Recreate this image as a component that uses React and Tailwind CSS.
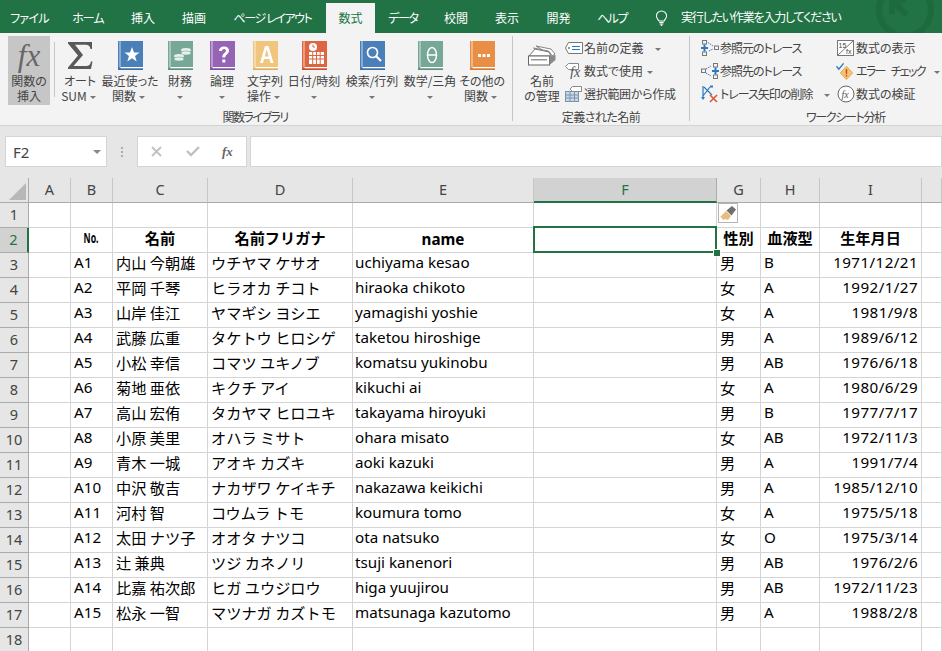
import { Fragment } from 'react'

const tabs = [
  ['ファイル', 'w-[59px] tracking-[-0.7px]'], ['ホーム', 'w-[58px] tracking-[-1px]'], ['挿入', 'w-[52px]'], ['描画', 'w-[50px]'],
  ['ページ レイアウト', 'w-[107px] tracking-[-1.4px]'], ['数式', 'w-[49px]'], ['データ', 'w-[56px] tracking-[-1.2px]'], ['校閲', 'w-[50px]'],
  ['表示', 'w-[52px]'], ['開発', 'w-[51px]'], ['ヘルプ', 'w-[56px] tracking-[-1.5px]'],
]

const people = [
  ['A1', '内山 今朝雄', 'ウチヤマ ケサオ', 'uchiyama kesao', '男', 'B', '1971/12/21'],
  ['A2', '平岡 千琴', 'ヒラオカ チコト', 'hiraoka chikoto', '女', 'A', '1992/1/27'],
  ['A3', '山岸 佳江', 'ヤマギシ ヨシエ', 'yamagishi yoshie', '女', 'A', '1981/9/8'],
  ['A4', '武藤 広重', 'タケトウ ヒロシゲ', 'taketou hiroshige', '男', 'A', '1989/6/12'],
  ['A5', '小松 幸信', 'コマツ ユキノブ', 'komatsu yukinobu', '男', 'AB', '1976/6/18'],
  ['A6', '菊地 亜依', 'キクチ アイ', 'kikuchi ai', '女', 'A', '1980/6/29'],
  ['A7', '高山 宏侑', 'タカヤマ ヒロユキ', 'takayama hiroyuki', '男', 'B', '1977/7/17'],
  ['A8', '小原 美里', 'オハラ ミサト', 'ohara misato', '女', 'AB', '1972/11/3'],
  ['A9', '青木 一城', 'アオキ カズキ', 'aoki kazuki', '男', 'A', '1991/7/4'],
  ['A10', '中沢 敬吉', 'ナカザワ ケイキチ', 'nakazawa keikichi', '男', 'A', '1985/12/10'],
  ['A11', '河村 智', 'コウムラ トモ', 'koumura tomo', '女', 'A', '1975/5/18'],
  ['A12', '太田 ナツ子', 'オオタ ナツコ', 'ota natsuko', '女', 'O', '1975/3/14'],
  ['A13', '辻 兼典', 'ツジ カネノリ', 'tsuji kanenori', '男', 'AB', '1976/2/6'],
  ['A14', '比嘉 祐次郎', 'ヒガ ユウジロウ', 'higa yuujirou', '男', 'AB', '1972/11/23'],
  ['A15', '松永 一智', 'マツナガ カズトモ', 'matsunaga kazutomo', '男', 'A', '1988/2/8'],
]

const gridCols = 'grid grid-cols-[29px_42px_42px_95px_145px_181px_183px_44px_59px_102px_20px]'
const cell = 'h-[25px] border-r border-b border-[#d4d4d4] px-[3px] leading-[19px] whitespace-nowrap text-[15.2px] text-black'
const latin = "font-['Noto_Sans',sans-serif] text-[14.7px] leading-[19px]"
const palt = "[font-feature-settings:'palt']"

function Caret() {
  return <span className="inline-block w-0 h-0 border-x-[3px] border-x-transparent border-t-[3px] border-t-[#777] align-middle mx-[3px]" />
}

function Book({ color, dark, children }) {
  return (
    <svg width="25" height="29" viewBox="0 0 25 29">
      <rect x="0" y="0" width="25" height="28" fill={color} />
      <rect x="1.500" y="0" width="1" height="26" fill="#fff" opacity="0.7" />
      <rect x="2.500" y="26" width="22.500" height="1.500" fill="#fff" />
      <rect x="0" y="27.500" width="25" height="1.500" fill={dark} />
      {children}
    </svg>
  )
}

function BigBtn({ width, icon, lines, caret, active }) {
  return (
    <div className={`${width} ${active ? 'bg-[#c6c6c6]' : ''} h-[69px] flex flex-col items-center shrink-0`}>
      <div className="h-[37px] pt-[5px] flex items-start justify-center">{icon}</div>
      <div className="text-[12px] leading-[15px] text-[#444] text-center whitespace-nowrap">
        {lines.map((l, i) => (
          <Fragment key={i}>
            {i > 0 && <br />}
            {l}
          </Fragment>
        ))}
        {caret && lines.length === 1 && <br />}
        {caret && <Caret />}
      </div>
    </div>
  )
}

function SmallBtn({ icon, label, caretGap, tight }) {
  return (
    <div className="h-[23px] flex items-center text-[12px] text-[#444] whitespace-nowrap">
      <span className="w-[19px] h-[18px] flex items-center justify-center mr-[1px] shrink-0">{icon}</span>
      <span className={tight}>{label}</span>
      {caretGap != null && <span className={caretGap}><Caret /></span>}
    </div>
  )
}

function Separator() {
  return <div className="w-px h-[85px] bg-[#c6c6c6] shrink-0" />
}

const IconSum = (
  <svg width="26" height="29" viewBox="0 0 26 29"><path d="M1 1h24v7h-1.500c-.5-3-2-4.300-5-4.300H8l8 10.300-9.500 11H19c3 0 4.500-1.500 5-4.500H25.500L24 28H1v-1.500L11 14.500 1 2.500z" fill="#595959" /></svg>
)
const IconStar = <Book color="#4a7fb8" dark="#3a6ea5"><path d="M14 6l2 5.500h5.500l-4.500 3.500 1.700 5.500-4.700-3.300-4.700 3.300 1.700-5.500-4.500-3.500h5.500z" fill="#fff" /></Book>
const IconCoins = (
  <Book color="#76a797" dark="#5d8f7e">
    <ellipse cx="18" cy="9" rx="5" ry="2" fill="#e8f0ed" /><ellipse cx="18" cy="12" rx="5" ry="2" fill="#e8f0ed" stroke="#76a797" strokeWidth="0.6" />
    <ellipse cx="11" cy="15" rx="5" ry="2" fill="#e8f0ed" /><ellipse cx="11" cy="18" rx="5" ry="2" fill="#e8f0ed" stroke="#76a797" strokeWidth="0.6" />
  </Book>
)
const IconQ = <Book color="#9564b5" dark="#7d4f9e"><path d="M9 10c0-3 2-4.500 5-4.500s5 1.500 5 4.200c0 3.600-3.700 3.500-3.700 6.800h-3c0-4.500 3.600-4.500 3.600-6.700 0-1-.8-1.700-1.900-1.700s-2 .7-2.100 2z" fill="#fff" /><rect x="12.300" y="18.500" width="3" height="3" fill="#fff" /></Book>
const IconA = <Book color="#f0c67f" dark="#e0ac5c"><path d="M12 5h3.500l5 17h-3l-1-4h-5.500l-1 4h-3zM13.700 8.500l-2 7h4z" fill="#fff" fillRule="evenodd" /></Book>
const IconCal = (
  <Book color="#dd6541" dark="#c5522f">
    <rect x="7" y="11" width="15" height="12" fill="#fff" />
    <path d="M7 14.500h15M7 18h15M10.700 11v12M14.500 11v12M18.200 11v12" stroke="#dd6541" strokeWidth="1" />
    <circle cx="11" cy="6" r="4" fill="#fff" /><path d="M11 3.500V6h2" stroke="#dd6541" fill="none" />
  </Book>
)
const IconSearch = <Book color="#4a7fb8" dark="#3a6ea5"><circle cx="12.500" cy="11.500" r="5" fill="none" stroke="#fff" strokeWidth="1.700" /><path d="M16 15l5 5" stroke="#fff" strokeWidth="2.200" /></Book>
const IconTheta = <Book color="#76a797" dark="#5d8f7e"><ellipse cx="14" cy="14" rx="4.500" ry="7.500" fill="none" stroke="#fff" strokeWidth="1.500" /><path d="M10 14h8" stroke="#fff" strokeWidth="1.500" /></Book>
const IconMore = <Book color="#e98f45" dark="#d67a30"><rect x="8" y="13" width="3" height="3" fill="#fff" /><rect x="12.500" y="13" width="3" height="3" fill="#fff" /><rect x="17" y="13" width="3" height="3" fill="#fff" /></Book>
const IconNames = (
  <svg className="mt-[4px]" width="28" height="21" viewBox="0 0 28 21">
    <path d="M8 1l15 3 4 5-3 2z" fill="#fff" stroke="#888" />
    <path d="M5.500 3l15 3 4 5-3 1z" fill="#fff" stroke="#888" />
    <circle cx="20" cy="7" r="1" fill="#888" />
    <path d="M1 11l6-7 14 3 2 4z" fill="#fff" stroke="#777" />
    <rect x=".5" y="11" width="21" height="9" fill="#fff" stroke="#666" />
    <path d="M21.500 11l6-1v5l-6 5z" fill="#8a8a8a" />
    <rect x="3" y="14" width="16" height="1.500" fill="#999" />
  </svg>
)
const IconTag = (
  <svg width="18" height="12" viewBox="0 0 18 12"><path d="M3.500.5h14v11h-14L.5 6z" fill="#fff" stroke="#777" /><circle cx="4" cy="6" r="1" fill="#777" /><path d="M7 4.500h8M7 7.500h8" stroke="#2b79c2" strokeWidth="1.200" /></svg>
)
const IconUseFx = (
  <svg width="18" height="17" viewBox="0 0 18 17"><path d="M3.500 1.500h10v6h-10L.5 4.500z" fill="#fff" stroke="#888" /><text x="5" y="15" fontSize="14" fontStyle="italic" fontFamily="Liberation Serif" fill="#555">fx</text></svg>
)
const IconCreate = (
  <svg width="18" height="17" viewBox="0 0 18 17"><rect x=".5" y="6.500" width="13" height="10" fill="#c9d9ea" stroke="#7d93a8" /><path d="M.5 10h13M.5 13h13M5 6.500v10M9.500 6.500v10" stroke="#7d93a8" /><path d="M7.500 1.500h9v5h-9L5 4z" fill="#fff" stroke="#888" /></svg>
)
const IconTracePrec = (
  <svg width="18" height="16" viewBox="0 0 18 16"><rect x="1.500" y="0.500" width="4" height="3.500" fill="none" stroke="#777" /><rect x="13.500" y="6" width="4" height="3.500" fill="none" stroke="#777" /><rect x="1.500" y="12" width="4" height="3.500" fill="none" stroke="#777" /><path d="M0 8h7M3.500 4.500v7" stroke="#2b79c2" strokeWidth="2" /><path d="M7 2.500l5 3.500M8 11l4-2" stroke="#2b79c2" strokeDasharray="1.500 1" /></svg>
)
const IconTraceDep = (
  <svg width="18" height="16" viewBox="0 0 18 16"><rect x="0.500" y="6" width="4" height="3.500" fill="none" stroke="#777" /><rect x="12.500" y="0.500" width="4" height="3.500" fill="none" stroke="#777" /><rect x="12.500" y="12" width="4" height="3.500" fill="none" stroke="#777" /><path d="M11 8h7M14.500 4.500v7" stroke="#2b79c2" strokeWidth="2" /><path d="M5 6l5-3M5 10l5 3" stroke="#2b79c2" strokeDasharray="1.500 1" /></svg>
)
const IconRemove = (
  <svg width="18" height="18" viewBox="0 0 18 18"><path d="M2 1v12M9 2l-7 9M3 2l8 8" stroke="#2b79c2" strokeWidth="1.200" fill="none" /><path d="M0 12l2 3 2-3zM9 .5h3v2H9z" fill="#2b79c2" /><path d="M9 10l7 7M16 10l-7 7" stroke="#d9583a" strokeWidth="1.600" /></svg>
)
const IconShowF = (
  <svg width="18" height="16" viewBox="0 0 18 16"><rect x=".5" y=".5" width="16" height="15" fill="#fff" stroke="#777" /><path d="M.5 15.500l16-15" stroke="#777" /><text x="1.500" y="7.500" fontSize="7" fontFamily="Liberation Sans" fill="#444">15</text><text x="9" y="14" fontSize="7" fontFamily="Liberation Sans" fill="#444">fx</text></svg>
)
const IconError = (
  <svg width="20" height="18" viewBox="0 0 20 18"><path d="M11 4l6.500 7-6.500 7-6.500-7z" fill="#f2c572" stroke="#e3a94c" /><rect x="10.200" y="7" width="1.600" height="5" fill="#d24726" /><rect x="10.200" y="13" width="1.600" height="1.700" fill="#d24726" /><path d="M.5 4l2.500 3L8 1" stroke="#2b79c2" strokeWidth="1.500" fill="none" /></svg>
)
const IconEval = (
  <svg width="18" height="18" viewBox="0 0 18 18"><circle cx="9" cy="9" r="8" fill="#fff" stroke="#666" /><text x="4.500" y="12.500" fontSize="10" fontStyle="italic" fontFamily="Liberation Serif" fill="#555">fx</text></svg>
)

function Ribbon() {
  return (
    <div className={`h-[93px] bg-[#f3f3f3] border-b border-[#d4d4d4] flex pt-[3px] shrink-0 ${palt}`}>
      {/* 関数ライブラリ */}
      <div className="w-[512px] pl-[8px] shrink-0">
        <div className="flex h-[69px]">
          <BigBtn width="w-[42px]" active lines={['関数の', '挿入']} icon={<span className="font-['Liberation_Serif',serif] italic text-[31px] leading-[30px] text-[#666]">fx</span>} />
          <div className="w-px h-[55px] bg-[#c6c6c6] ml-[4px] mt-[6px] shrink-0" />
          <BigBtn width="w-[50px]" caret lines={['オート', 'SUM']} icon={IconSum} />
          <BigBtn width="w-[50px]" caret lines={['最近使った', '関数']} icon={IconStar} />
          <BigBtn width="w-[50px]" caret lines={['財務']} icon={IconCoins} />
          <BigBtn width="w-[34px]" caret lines={['論理']} icon={IconQ} />
          <BigBtn width="w-[52px]" caret lines={['文字列', '操作']} icon={IconA} />
          <BigBtn width="w-[46px]" caret lines={['日付/時刻']} icon={IconCal} />
          <BigBtn width="w-[70px]" caret lines={['検索/行列']} icon={IconSearch} />
          <BigBtn width="w-[46px]" caret lines={['数学/三角']} icon={IconTheta} />
          <BigBtn width="w-[58px]" caret lines={['その他の', '関数']} icon={IconMore} />
        </div>
        <div className="text-[12px] text-[#444] text-center leading-[16px] mt-[4px] pr-[10px] tracking-[-1.500px]">関数ライブラリ</div>
      </div>
      <Separator />
      {/* 定義された名前 */}
      <div className="w-[176px] pl-[7px] shrink-0">
        <div className="flex h-[69px]">
          <BigBtn width="w-[44px]" lines={['名前', 'の管理']} icon={IconNames} />
          <div>
            <SmallBtn icon={IconTag} label="名前の定義" caretGap="ml-[8px]" />
            <SmallBtn icon={IconUseFx} label="数式で使用" caretGap="ml-[1px]" />
            <SmallBtn icon={IconCreate} label="選択範囲から作成" tight="tracking-[-0.3px]" />
          </div>
        </div>
        <div className="text-[12px] text-[#444] text-center leading-[16px] mt-[4px] pr-[7px] tracking-[-0.5px]">定義された名前</div>
      </div>
      <Separator />
      {/* ワークシート分析 */}
      <div className="flex-1 pl-[10px]">
        <div className="flex h-[69px]">
          <div className="w-[136px]">
            <SmallBtn icon={IconTracePrec} label="参照元のトレース" tight="tracking-[-1px]" />
            <SmallBtn icon={IconTraceDep} label="参照先のトレース" tight="tracking-[-1px]" />
            <SmallBtn icon={IconRemove} label="トレース矢印の削除" caretGap="ml-[9px]" tight="tracking-[-1px]" />
          </div>
          <div>
            <SmallBtn icon={IconShowF} label="数式の表示" />
            <SmallBtn icon={IconError} label="エラー チェック" caretGap="ml-[6px]" tight="tracking-[-1.700px] [word-spacing:5px]" />
            <SmallBtn icon={IconEval} label="数式の検証" />
          </div>
        </div>
        <div className="text-[12px] text-[#444] text-center leading-[16px] mt-[4px] pl-[48px] tracking-[-1.300px]">ワークシート分析</div>
      </div>
    </div>
  )
}

function TitleBar() {
  return (
    <div className={`relative h-[33px] bg-[#217346] flex items-end shrink-0 text-[12px] text-white overflow-hidden ${palt}`}>
      <div className="flex pt-[3px] h-[33px]">
        {tabs.map(([t, w]) => (
          <div key={t} className={`${w} flex items-center justify-center whitespace-nowrap ${t === '数式' ? 'bg-[#f3f3f3] text-[#217346]' : ''}`}>{t}</div>
        ))}
      </div>
      <svg className="ml-[15px] mb-[6px] shrink-0" width="13" height="17" viewBox="0 0 18 22" fill="none" stroke="#fff" strokeWidth="1.500">
        <path d="M5.500 14.500C4.500 12 2 11 2 7.500a7 7 0 0 1 14 0c0 3.500-2.500 4.500-3.500 7z" />
        <path d="M6 16.500h6M6.500 18.500h5M8 20.500h2" />
      </svg>
      <div className="ml-[13px] h-[33px] flex items-center whitespace-nowrap text-[12px] tracking-[-1.200px]">実行したい作業を入力してください</div>
      {/* 右上の透かし */}
      <svg className="absolute left-[873px] -top-[16px]" width="70" height="60" viewBox="0 0 70 60" fill="none" stroke="#1c6a3e" strokeWidth="6">
        <circle cx="32" cy="26" r="26" />
        <path d="M34 31L20 17M19 30V16h14" />
      </svg>
    </div>
  )
}

function FormulaBar() {
  return (
    <div className="h-[31px] mt-[10px] flex shrink-0 bg-[#e6e6e6]">
      <div className="ml-[5px] w-[102px] h-[31px] bg-white border border-[#d4d4d4] flex items-center justify-between pl-[7px] pr-[5px] font-['Noto_Sans',sans-serif] text-[15px] text-[#444]">
        <span className="pt-[2px]">F2</span>
        <span className="w-0 h-0 border-x-[4px] border-x-transparent border-t-[4px] border-t-[#888]" />
      </div>
      <div className="w-[30px] flex flex-col items-center justify-center gap-[2px]">
        <span className="w-[2px] h-[2px] bg-[#aaa]" />
        <span className="w-[2px] h-[2px] bg-[#aaa]" />
        <span className="w-[2px] h-[2px] bg-[#aaa]" />
      </div>
      <div className="w-[110px] h-[31px] bg-white border border-[#d4d4d4] flex items-center">
        <svg className="ml-[13px]" width="11" height="11" viewBox="0 0 11 11" stroke="#c0c0c0" strokeWidth="1.800"><path d="M1 1l9 9M10 1l-9 9" /></svg>
        <svg className="ml-[24px]" width="14" height="11" viewBox="0 0 14 11" stroke="#c0c0c0" strokeWidth="2.400" fill="none"><path d="M1 5l4 4 8-8" /></svg>
        <span className="ml-[22px] font-['Liberation_Serif',serif] italic font-bold text-[13px] text-[#666]">fx</span>
      </div>
      <div className="ml-[3px] flex-1 h-[31px] bg-white border border-[#d4d4d4]" />
    </div>
  )
}

function ColHeader({ label, active }) {
  return (
    <div className={`h-[25px] text-center leading-[23px] font-['Noto_Sans',sans-serif] text-[14.5px] border-r ${active ? 'bg-[#d2d2d2] text-[#217346] border-b-2 border-b-[#217346] border-r-[#ababab]' : 'bg-[#e6e6e6] text-[#444] border-b border-b-[#ababab] border-r-[#c6c6c6]'}`}>{label}</div>
  )
}

function RowHeader({ n, active }) {
  return (
    <div className={`h-[25px] text-center leading-[22px] font-['Noto_Sans',sans-serif] text-[14.5px] ${active ? 'bg-[#d2d2d2] text-[#217346] border-r-2 border-r-[#217346] border-b border-b-[#ababab]' : 'bg-[#e6e6e6] text-[#444] border-r border-r-[#ababab] border-b border-b-[#ababab]'}`}>{n}</div>
  )
}

const bold = 'text-center font-bold'

function Sheet() {
  return (
    <div className={`${gridCols} mt-[11px] bg-white`}>
      <div className="h-[25px] bg-[#e6e6e6] border-r border-b border-[#ababab] flex items-end justify-end pr-[2px] pb-[2px]">
        <svg width="17" height="17" viewBox="0 0 17 17"><path d="M17 0v17H0z" fill="#b8b8b8" /></svg>
      </div>
      {['A', 'B', 'C', 'D', 'E'].map((c) => <ColHeader key={c} label={c} />)}
      <ColHeader label="F" active />
      {['G', 'H', 'I', ''].map((c, i) => <ColHeader key={i} label={c} />)}

      {/* 1行目 */}
      <RowHeader n={1} />
      {Array.from({ length: 6 }).map((_, i) => <div key={i} className={cell} />)}
      <div className={`${cell} relative`}>
        <div className="absolute left-[1px] top-[0px] w-[20px] h-[20px] bg-white border border-[#b5b5b5] flex items-center justify-center">
          <svg width="17" height="15" viewBox="0 0 17 15"><path d="M0 11l6-6 5 5-3 4-3-1-2 1-1-2z" fill="#e8bd7c" /><path d="M6.500 4.500L12 0l4 3.500-4.500 6z" fill="#6f6f6f" /></svg>
        </div>
      </div>
      <div className={cell} />
      <div className={cell} />
      <div className={cell} />

      {/* 2行目 */}
      <RowHeader n={2} active />
      <div className={cell} />
      <div className={`${cell} ${latin} text-center font-bold`}><span className="inline-block scale-x-[0.62] text-[14px]">No.</span></div>
      <div className={`${cell} ${bold}`}>名前</div>
      <div className={`${cell} ${bold}`}>名前フリガナ</div>
      <div className={`${cell} ${latin} ${bold} pt-[2px]`}>name</div>
      <div className={`${cell} relative`}>
        <div className="absolute -left-[1px] -top-[2px] w-[184px] h-[27px] border-2 border-[#217346] z-10" />
        <div className="absolute left-[179px] top-[21px] w-[6px] h-[6px] bg-[#217346] border border-white box-content z-20" />
      </div>
      <div className={`${cell} ${bold}`}>性別</div>
      <div className={`${cell} ${bold}`}>血液型</div>
      <div className={`${cell} ${bold}`}>生年月日</div>
      <div className={cell} />

      {people.map((p, i) => (
        <div key={p[0]} className="contents">
          <RowHeader n={i + 3} />
          <div className={cell} />
          <div className={`${cell} ${latin}`}>{p[0]}</div>
          <div className={cell}>{p[1]}</div>
          <div className={cell}>{p[2]}</div>
          <div className={`${cell} ${latin} pl-[2px]`}>{p[3]}</div>
          <div className={cell} />
          <div className={cell}>{p[4]}</div>
          <div className={`${cell} ${latin}`}>{p[5]}</div>
          <div className={`${cell} ${latin} text-right tracking-[0.4px]`}>{p[6]}</div>
          <div className={cell} />
        </div>
      ))}

      {/* 18行目 */}
      <RowHeader n={18} />
      {Array.from({ length: 10 }).map((_, i) => <div key={i} className={cell} />)}
    </div>
  )
}

export default function App() {
  return (
    <div className="w-[942px] h-[651px] overflow-hidden flex flex-col bg-[#e6e6e6] font-['Noto_Sans_CJK_JP',sans-serif]">
      <TitleBar />
      <Ribbon />
      <FormulaBar />
      <Sheet />
    </div>
  )
}
